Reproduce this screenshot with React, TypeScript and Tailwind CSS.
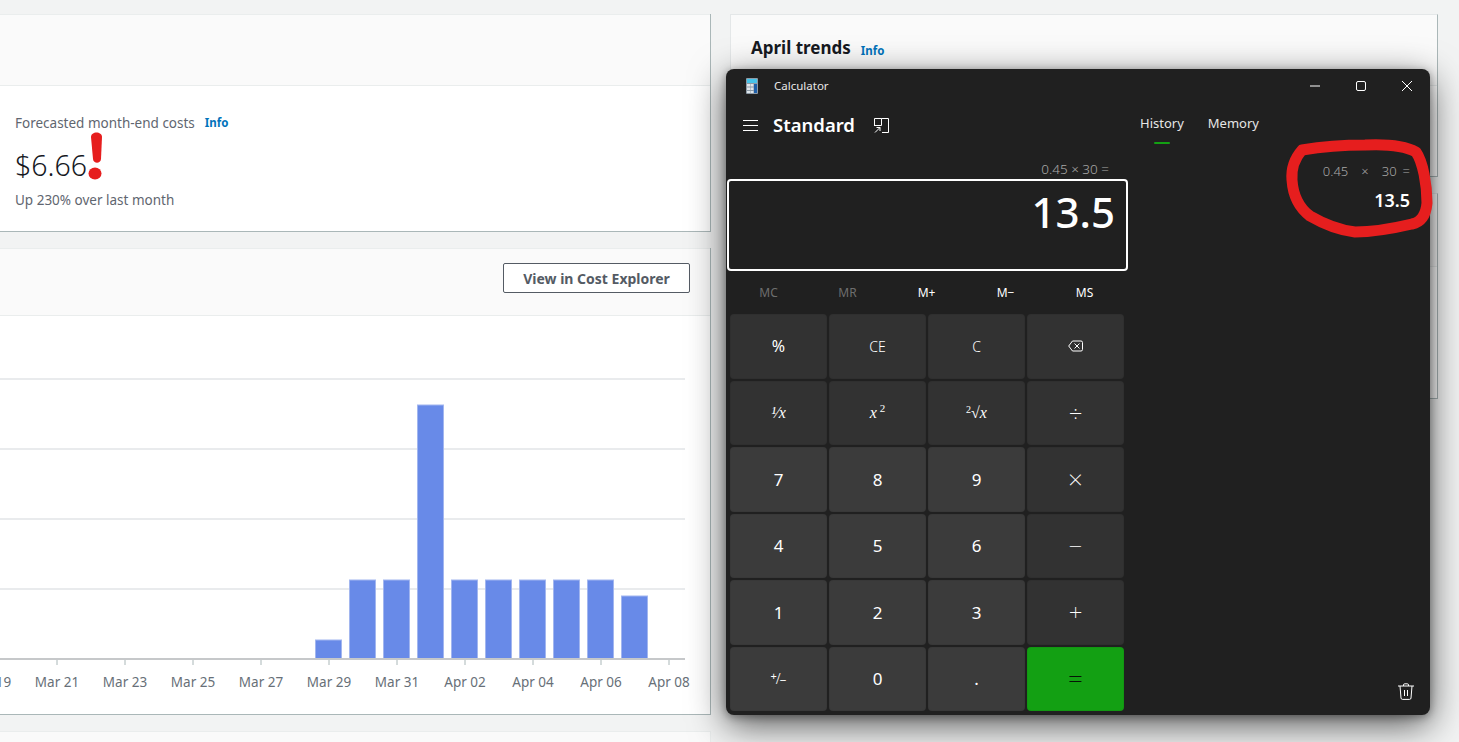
import type { ReactNode } from "react"

const pageFont = "font-['Noto_Sans',sans-serif]"
const serif = "font-['Liberation_Serif',serif] italic"

const ticks = [
  ["Mar 19", -11],
  ["Mar 21", 57],
  ["Mar 23", 125],
  ["Mar 25", 193],
  ["Mar 27", 261],
  ["Mar 29", 329],
  ["Mar 31", 397],
  ["Apr 02", 465],
  ["Apr 04", 533],
  ["Apr 06", 601],
  ["Apr 08", 669],
] as const

const bars = [
  [315, 640],
  [349, 580],
  [383, 580],
  [417, 405],
  [451, 580],
  [485, 580],
  [519, 580],
  [553, 580],
  [587, 580],
  [621, 596],
]

function Chart() {
  return (
    <svg width="710" height="398" viewBox="0 316 710 398" className="block">
      {[379, 449, 519, 589].map((y) => (
        <line key={y} x1="0" x2="685" y1={y} y2={y} stroke="#e9ebed" strokeWidth="2" />
      ))}
      {bars.map(([x, top]) => (
        <rect key={x} x={x + 0.5} y={top} width="26" height={659 - top} fill="#688ae8" stroke="#a2b6ef" strokeWidth="1" />
      ))}
      <line x1="0" x2="685" y1="659" y2="659" stroke="#c6c8ca" strokeWidth="2" />
      {ticks.map(([label, x]) => (
        <g key={label}>
          <line x1={x} x2={x} y1="660" y2="665" stroke="#aab7b8" />
          <text x={x} y="687" textAnchor="middle" fontSize="13.5" fill="#687078" fontFamily="Noto Sans, sans-serif">
            {label}
          </text>
        </g>
      ))}
    </svg>
  )
}

function Info() {
  return <span className="text-[11.5px] font-bold text-[#0073bb]">Info</span>
}

function LeftColumn() {
  return (
    <div className="flex w-[711px] shrink-0 flex-col gap-[16px]">
      <section className="border-r border-b border-[#aab7b8] bg-white">
        <div className="h-[72px] border-t border-b border-[#eaeded] bg-[#fafafa]" />
        <div className="h-[145px] pl-[15px] pt-[27px]">
          <p className="flex h-[20px] items-center gap-[10px] text-[13.5px] text-[#5f6670]">
            Forecasted month-end costs <Info />
          </p>
          <div className="mt-[12px] flex h-[40px] items-center text-[28.5px] font-light text-[#16191f]">
            $6.66
            <svg width="16" height="48" viewBox="0 0 16 48" className="-mt-[18px] ml-px">
              <path d="M3 5 C3 -1 14 -1 14 5 L13 27 C12.5 32 5.5 32 5 27 Z" fill="#e61e1e" />
              <ellipse cx="7" cy="41.5" rx="6.5" ry="6" fill="#e61e1e" />
            </svg>
          </div>
          <p className="mt-[5px] text-[13.5px] text-[#5f6670]">Up 230% over last month</p>
        </div>
      </section>
      <section className="border-r border-b border-[#aab7b8] bg-white">
        <div className="flex h-[68px] items-start justify-end border-t border-b border-[#eaeded] bg-[#fafafa] pt-[14px] pr-[20px]">
          <button className="h-[30px] w-[187px] rounded-[2px] border border-[#545b64] bg-white text-[14px] font-bold text-[#545b64]">
            View in Cost Explorer
          </button>
        </div>
        <Chart />
      </section>
      <section className="h-[40px] border-t border-r border-[#eaeded] bg-[#fafafa]" />
    </div>
  )
}

function RightColumn() {
  return (
    <div className="flex w-[708px] shrink-0 flex-col gap-[16px]">
      <section className="h-[163px] border border-[#e4e7e8] border-r-[#aab7b8] border-b-[#aab7b8] bg-white">
        <div className="flex h-[71px] items-start gap-[10px] border-b border-[#eaeded] bg-[#fafafa] pl-[20px] pt-[20px]">
          <h2 className="text-[17px] leading-[26px] font-bold text-[#16191f]">April trends</h2>
          <span className="pt-[5px] leading-[18px]">
            <Info />
          </span>
        </div>
      </section>
      <section className="h-[206px] border border-[#e4e7e8] border-r-[#aab7b8] border-b-[#aab7b8] bg-white">
        <div className="h-[73px] border-b border-[#eaeded] bg-[#fafafa]" />
      </section>
    </div>
  )
}

function LogoIcon() {
  return (
    <svg width="12" height="16" viewBox="0 0 12 16">
      <rect width="12" height="16" rx="1" fill="#8d9aa6" />
      <rect x="1" y="1" width="10" height="4" fill="#47c4ea" />
      <g fill="#dfe6ec">
        <rect x="1" y="6" width="3" height="2.5" />
        <rect x="4.5" y="6" width="3" height="2.5" />
        <rect x="1" y="9.5" width="3" height="2.5" />
        <rect x="4.5" y="9.5" width="3" height="2.5" />
        <rect x="1" y="13" width="3" height="2" />
        <rect x="4.5" y="13" width="3" height="2" />
      </g>
      <rect x="8" y="6" width="3" height="9" fill="#1f5fa8" />
    </svg>
  )
}

function WindowControls() {
  return (
    <div className="flex items-center gap-[36px] pr-[18px] text-white">
      <svg width="10" height="10" viewBox="0 0 10 10">
        <path d="M0 5h10" stroke="currentColor" />
      </svg>
      <svg width="10" height="10" viewBox="0 0 10 10">
        <rect x="0.5" y="0.5" width="9" height="9" rx="1.5" fill="none" stroke="currentColor" />
      </svg>
      <svg width="10" height="10" viewBox="0 0 10 10">
        <path d="M0 0l10 10M10 0L0 10" stroke="currentColor" />
      </svg>
    </div>
  )
}

function BackspaceIcon() {
  return (
    <svg width="15" height="12" viewBox="0 0 15 12" fill="none" stroke="#fff">
      <path d="M4.5 1H13a1.5 1.5 0 0 1 1.5 1.5v7A1.5 1.5 0 0 1 13 11H4.5L.7 6z" />
      <path d="M6.5 3.5l5 5M11.5 3.5l-5 5" />
    </svg>
  )
}

type Key = { label: ReactNode; kind?: "num" | "eq"; size?: string }

const keys: Key[] = [
  { label: "%", size: "text-[16px]" },
  { label: "CE", size: "text-[14px] font-light" },
  { label: "C", size: "text-[14px] font-light" },
  { label: <BackspaceIcon /> },
  { label: <span className={`${serif} text-[16px]`}>¹⁄x</span> },
  { label: <span className={`${serif} text-[16px]`}>x<sup className="not-italic text-[11px]"> 2</sup></span> },
  { label: <span className={`${serif} text-[16px]`}><sup className="not-italic text-[10px]">2</sup>√x</span> },
  { label: "÷", size: "text-[24px] font-extralight" },
  { label: "7", kind: "num" },
  { label: "8", kind: "num" },
  { label: "9", kind: "num" },
  { label: "×", size: "text-[26px] font-extralight" },
  { label: "4", kind: "num" },
  { label: "5", kind: "num" },
  { label: "6", kind: "num" },
  { label: "−", size: "text-[24px] font-extralight" },
  { label: "1", kind: "num" },
  { label: "2", kind: "num" },
  { label: "3", kind: "num" },
  { label: "+", size: "text-[24px] font-extralight" },
  {
    label: (
      <span className="flex items-center">
        <span className="-mt-[5px] text-[11px]">+</span>
        <span className="-mx-px text-[14px] font-light">/</span>
        <span className="mt-[5px] text-[12px]">−</span>
      </span>
    ),
    kind: "num",
    size: "text-[15px]",
  },
  { label: "0", kind: "num" },
  { label: ".", kind: "num" },
  { label: "=", kind: "eq", size: "text-[26px] font-extralight" },
]

function keyClass(kind?: Key["kind"]) {
  if (kind === "num") return "bg-[#3b3b3b] text-white"
  if (kind === "eq") return "bg-[#13a013] text-[#061406]"
  return "bg-[#323232] text-white"
}

function Calculator() {
  return (
    <div className="absolute top-[69px] left-[726px] flex h-[646px] w-[704px] flex-col rounded-[8px] bg-[#202020] font-['Noto_Sans',sans-serif] text-white shadow-[0_10px_36px_rgba(0,0,0,0.65),0_2px_8px_rgba(0,0,0,0.35)]">
      <div className="flex h-[34px] shrink-0 items-center justify-between">
        <div className="flex items-center gap-[16px] pl-[20px] text-[11.5px] text-[#e8e8e8]">
          <LogoIcon />
          <span>Calculator</span>
        </div>
        <WindowControls />
      </div>
      <div className="flex flex-1">
        <div className="flex w-[402px] shrink-0 flex-col">
          <div className="flex h-[44px] items-center pl-[17px]">
            <svg width="15" height="11" viewBox="0 0 15 11" stroke="#fff">
              <path d="M0 .5h15M0 5.5h15M0 10.5h15" />
            </svg>
            <h1 className="ml-[15px] text-[18.5px] font-semibold">Standard</h1>
            <svg width="15" height="15" viewBox="0 0 15 15" fill="none" stroke="#fff" className="ml-[19px]">
              <path d="M.5 8V.5h7v7H.5M7.5.5h7v14H8M1 14.5L6 9.5M2.5 9.5H6V13" />
            </svg>
          </div>
          <div className="flex h-[32px] items-center justify-end pt-[12px] pr-[19px] text-[13.5px] font-light text-[#a8a8a8]">0.45 × 30 =</div>
          <div className="ml-px flex h-[92px] w-[401px] shrink-0 justify-end rounded-[4px] border-2 border-white pr-[11px] text-[42px] leading-[62px] font-medium">
            13.5
          </div>
          <div className="grid h-[43px] w-[398px] shrink-0 grid-cols-5 items-center pl-[3px] text-center text-[12px]">
            <span className="text-[#6e6e6e]">MC</span>
            <span className="text-[#6e6e6e]">MR</span>
            <span>M+</span>
            <span>M−</span>
            <span>MS</span>
          </div>
          <div className="ml-[4px] grid h-[397px] w-[394px] shrink-0 grid-cols-4 grid-rows-6 gap-[2px]">
            {keys.map((k, i) => (
              <button
                key={i}
                className={`flex items-center justify-center rounded-[4px] border border-black/5 ${keyClass(k.kind)} ${k.size ?? "text-[17px]"}`}
              >
                {k.label}
              </button>
            ))}
          </div>
        </div>
        <div className="relative flex-1">
          <div className="flex gap-[24px] pt-[11px] pl-[12px] text-[13px] text-[#e6e6e6]">
            <span className="relative">
              History
              <span className="absolute top-[28px] left-[14px] h-[2px] w-[16px] rounded-full bg-[#13a013]" />
            </span>
            <span>Memory</span>
          </div>
          <div className="absolute top-[59px] right-[20px] text-right">
            <p className="flex justify-end text-[13px] font-light text-[#a8a8a8]">
              <span>0.45</span>
              <span className="ml-[13px]">×</span>
              <span className="ml-[13px]">30</span>
              <span className="ml-[6px]">=</span>
            </p>
            <p className="mt-[6px] text-[18px] leading-[24px] font-semibold">13.5</p>
          </div>
          <svg width="16" height="17" viewBox="0 0 16 17" fill="none" stroke="#fff" className="absolute right-[16px] bottom-[15px]">
            <path d="M0 3h16M5.5 3V2a1.2 1.2 0 0 1 1.2-1.2h2.6A1.2 1.2 0 0 1 10.5 2v1M2 3l1 12a1.5 1.5 0 0 0 1.5 1.4h7A1.5 1.5 0 0 0 13 15l1-12M6.5 7v6M9.5 7v6" />
          </svg>
        </div>
      </div>
    </div>
  )
}

function RedCircle() {
  return (
    <svg width="1459" height="742" viewBox="0 0 1459 742" fill="none" className="pointer-events-none absolute inset-0">
      <path
        d="M1302 150 C1320 147 1345 145 1365 145 C1385 144 1405 146 1416 152 C1423 162 1427 185 1427 203 C1426 214 1422 222 1412 224 C1395 228 1375 232 1355 232 C1338 230 1322 223 1310 216 C1298 207 1293 195 1292 180 C1291 168 1295 158 1302 150 Z"
        stroke="#e61e1e"
        strokeWidth="11"
        strokeLinejoin="round"
      />
    </svg>
  )
}

export default function App() {
  return (
    <div className={`relative h-[742px] overflow-hidden bg-[#f2f3f3] pt-[14px] ${pageFont}`}>
      <div className="flex gap-[19px]">
        <LeftColumn />
        <RightColumn />
      </div>
      <Calculator />
      <RedCircle />
    </div>
  )
}
